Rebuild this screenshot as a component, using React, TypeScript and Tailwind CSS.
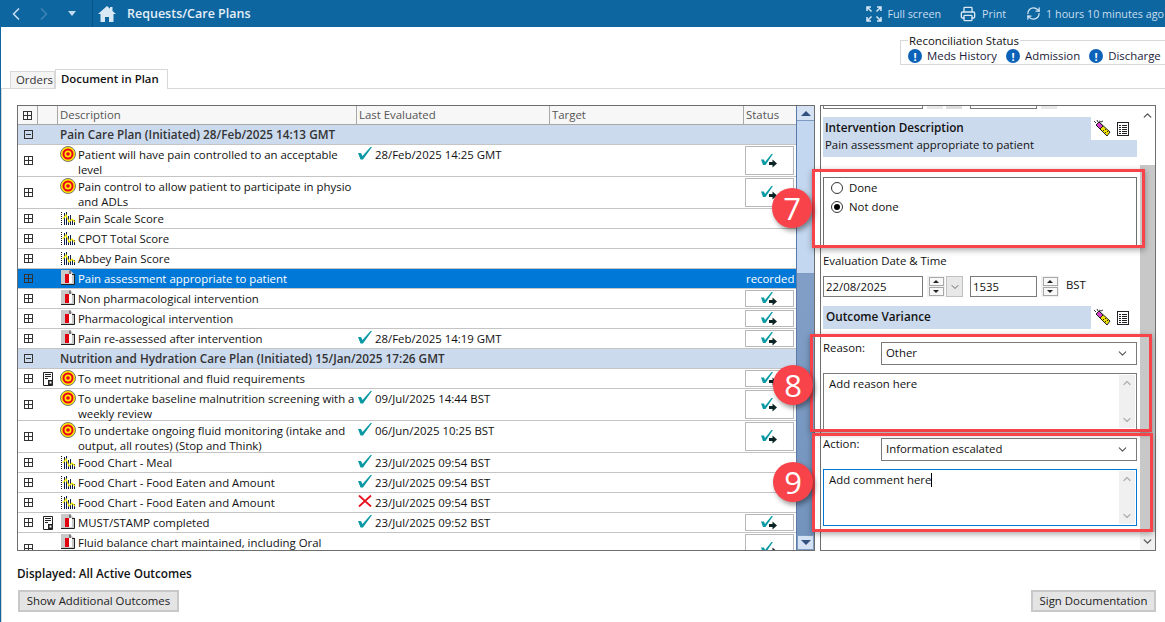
import React from 'react';
import { ChevronLeft, ChevronRight, ChevronUp, ChevronDown, RefreshCw, Printer } from 'lucide-react';

const font = 'font-["Open_Sans","Noto_Sans",sans-serif]';

const Plus = ({ minus }: { minus?: boolean }) => (
  <svg width="9" height="9" viewBox="0 0 9 9" className="shrink-0">
    <rect x="0.5" y="0.5" width="8" height="8" fill="none" stroke="#333" />
    <path d={minus ? 'M2 4.5h5' : 'M0 4.5h9M4.5 0v9'} stroke="#333" />
  </svg>
);

const Target = () => (
  <svg width="16" height="16" viewBox="0 0 16 16" className="shrink-0">
    <circle cx="8" cy="8" r="7.5" fill="#ffe600" stroke="#777" />
    <circle cx="8" cy="8" r="5.5" fill="#e8001c" />
    <circle cx="8" cy="8" r="3.5" fill="#ffe600" />
    <circle cx="8" cy="8" r="1.8" fill="#e8001c" />
  </svg>
);

const Chart = () => (
  <svg width="16" height="16" viewBox="0 0 16 16" className="shrink-0">
    <path d="M1.5 2v13" stroke="#111" strokeDasharray="1 1" />
    <path d="M4.5 15V3M6.5 15V2M8.5 15V6M10.5 15V5M12.5 15V9M14.5 15V10" stroke="#0c1c50" />
    <path d="M3 9l3-4 3 7 3-3 3 3" stroke="#ffee00" strokeWidth="1.2" fill="none" />
  </svg>
);

const DocRed = () => (
  <svg width="14" height="15" viewBox="0 0 14 15" className="shrink-0">
    <path d="M0 0h9l4 4v10H0z" fill="#c9c9c9" />
    <path d="M9 .5v4h4M13.5 4v10.5H0" stroke="#222" fill="none" />
    <rect x="4" y="4" width="4" height="9" fill="#e00010" />
    <rect x="8" y="4" width="3" height="9" fill="#fff" />
  </svg>
);

const Note = () => (
  <svg width="11" height="14" viewBox="0 0 11 14" className="shrink-0">
    <path d="M.5.5h9v13h-9z" fill="#fff" stroke="#222" />
    <path d="M2 2.5h6M2 4.5h6M2 6.5h3" stroke="#222" />
    <rect x="5" y="8" width="5" height="5" fill="#222" />
    <rect x="6.5" y="9.5" width="2" height="2" fill="#fff" />
  </svg>
);

const Tick = () => (
  <svg width="14" height="13" viewBox="0 0 14 13" className="shrink-0">
    <path d="M0 6h3l1.5 3L12.5 0H14L5 12.5H2.5z" fill="#0a98a4" />
  </svg>
);

const Cross = () => (
  <svg width="14" height="12" viewBox="0 0 14 12" className="shrink-0">
    <path d="M1 .5l12 11M13 .5l-12 11" stroke="#e8101c" strokeWidth="1.8" />
  </svg>
);

const TickArrow = () => (
  <svg width="17" height="14" viewBox="0 0 17 14">
    <path d="M0 5.500h3l1 2.500L10.500 0H12L4.500 11H2z" fill="#0a9aa4" />
    <path d="M8 8h3.5V5.500L16 9.500l-4.500 4V11H8z" fill="#0c2424" />
  </svg>
);

const Wand = () => (
  <svg width="18" height="17" viewBox="0 0 18 17" className="shrink-0">
    <path d="M1 1l2 2M4 0l1 2M6 1l2 1 2-1" stroke="#333" fill="none" />
    <path d="M3 5l3-3 11 10-3 4z" fill="#f0e000" stroke="#222" />
    <path d="M3 5l3-3 4 4-3 3z" fill="#d040c8" stroke="#222" />
    <path d="M10 10l1 1M12 12l1 1M12 9l1 1M14 11l1 1M11 13l1 1" stroke="#222" />
  </svg>
);

const ListIcon = () => (
  <svg width="12" height="14" viewBox="0 0 12 14" className="shrink-0">
    <rect x="0.5" y="0.5" width="11" height="13" fill="#fff" stroke="#222" />
    <path d="M2 3.500h8M2 5.500h8M2 7.500h8M2 9.500h8M2 11.500h8" stroke="#222" />
    <path d="M4.500 2v10" stroke="#fff" />
  </svg>
);

const Alert = () => (
  <span className="flex h-[14px] w-[14px] shrink-0 items-center justify-center rounded-full bg-[#0b62b8] text-[11px] font-bold leading-none text-white">!</span>
);

type Row = {
  text: string;
  second?: string;
  tall?: boolean;
  icon?: 'target' | 'chart' | 'doc';
  note?: boolean;
  date?: string;
  mark?: 'tick' | 'cross';
  action?: boolean;
  selected?: boolean;
  group?: boolean;
};

const rows: Row[] = [
  { text: 'Pain Care Plan (Initiated) 28/Feb/2025 14:13 GMT', group: true },
  { text: 'Patient will have pain controlled to an acceptable', second: 'level', icon: 'target', date: '28/Feb/2025 14:25 GMT', mark: 'tick', action: true },
  { text: 'Pain control to allow patient to participate in physio', second: 'and ADLs', icon: 'target', action: true },
  { text: 'Pain Scale Score', icon: 'chart' },
  { text: 'CPOT Total Score', icon: 'chart' },
  { text: 'Abbey Pain Score', icon: 'chart' },
  { text: 'Pain assessment appropriate to patient', icon: 'doc', selected: true },
  { text: 'Non pharmacological intervention', icon: 'doc', action: true },
  { text: 'Pharmacological intervention', icon: 'doc', action: true },
  { text: 'Pain re-assessed after intervention', icon: 'doc', date: '28/Feb/2025 14:19 GMT', mark: 'tick', action: true },
  { text: 'Nutrition and Hydration Care Plan (Initiated) 15/Jan/2025 17:26 GMT', group: true },
  { text: 'To meet nutritional and fluid requirements', icon: 'target', note: true, action: true },
  { text: 'To undertake baseline malnutrition screening with a', second: 'weekly review', icon: 'target', date: '09/Jul/2025 14:44 BST', mark: 'tick', action: true },
  { text: 'To undertake ongoing fluid monitoring (intake and', second: 'output, all routes) (Stop and Think)', icon: 'target', date: '06/Jun/2025 10:25 BST', mark: 'tick', action: true },
  { text: 'Food Chart - Meal', icon: 'chart', date: '23/Jul/2025 09:54 BST', mark: 'tick' },
  { text: 'Food Chart - Food Eaten and Amount', icon: 'chart', date: '23/Jul/2025 09:54 BST', mark: 'tick' },
  { text: 'Food Chart - Food Eaten and Amount', icon: 'chart', date: '23/Jul/2025 09:54 BST', mark: 'cross' },
  { text: 'MUST/STAMP completed', icon: 'doc', note: true, date: '23/Jul/2025 09:52 BST', mark: 'tick', action: true },
  { text: 'Fluid balance chart maintained, including Oral', tall: true, icon: 'doc', action: true },
];

const RowIcon = ({ icon }: { icon?: Row['icon'] }) => {
  if (icon === 'target') return <Target />;
  if (icon === 'chart') return <Chart />;
  return <DocRed />;
};

const PlanRow = ({ row }: { row: Row }) => {
  if (row.group) {
    return (
      <div className="flex h-5 shrink-0 items-center border-b border-[#c4c4c4] bg-[#ccdaee]">
        <span className="flex w-[20px] justify-center"><Plus minus /></span>
        <span className="ml-[22px] -translate-y-px whitespace-nowrap text-[11.75px] font-semibold text-[#333]">{row.text}</span>
      </div>
    );
  }
  const tall = !!row.second || row.tall;
  return (
    <div className={`flex shrink-0 border-b border-[#c4c4c4] ${tall ? 'h-8' : 'h-5'} ${row.selected ? 'bg-[#0078d7] text-white' : ''}`}>
      <span className="flex w-[20px] items-center justify-center"><Plus /></span>
      <span className="flex w-[20px] items-start justify-center pt-[3px]">{row.note && <Note />}</span>
      <span className="flex w-[299px] items-start whitespace-nowrap pl-[2px]">
        <span className="mr-[2px] flex w-[16px] justify-center pt-[1px]"><RowIcon icon={row.icon} /></span>
        <span className="pt-[2px] leading-[15px]">
          {row.text}
          {row.second && <><br />{row.second}</>}
        </span>
      </span>
      <span className="flex w-[193px] items-start gap-[3px] whitespace-nowrap pl-[1px] pt-[2px] leading-[15px]">
        {row.mark === 'tick' && <Tick />}
        {row.mark === 'cross' && <Cross />}
        {row.date}
      </span>
      <span className="w-[194px]" />
      <span className="flex w-[52px] items-center pl-[1px]">
        {row.selected && <span className="whitespace-nowrap pl-[1px]">recorded</span>}
        {row.action && (
          <span className={`flex w-[49px] items-center justify-center border border-[#b8b8b8] bg-white ${tall ? 'h-[29px]' : 'h-[17px]'}`}>
            <TickArrow />
          </span>
        )}
      </span>
    </div>
  );
};

const HeaderCell = ({ label, w }: { label?: string; w: string }) => (
  <span className={`flex h-full shrink-0 items-center border-r border-[#a8a8a8] pl-[2px] text-[#555] ${w}`}>{label}</span>
);

const Spin = () => (
  <span className="flex h-[21px] w-[18px] shrink-0 flex-col items-center justify-center gap-[1px] bg-[#f0f0f0]">
    <span className="flex h-[9px] w-[15px] items-center justify-center border border-[#a8a8a8] bg-[#f8f8f8]">
      <span className="h-0 w-0 border-x-[3px] border-b-[3px] border-x-transparent border-b-[#222]" />
    </span>
    <span className="flex h-[9px] w-[15px] items-center justify-center border border-[#a8a8a8] bg-[#f8f8f8]">
      <span className="h-0 w-0 border-x-[3px] border-t-[3px] border-x-transparent border-t-[#222]" />
    </span>
  </span>
);

const TextBox = ({ text, focus }: { text: string; focus?: boolean }) => (
  <div className={`flex h-[57px] w-[314px] justify-between border ${focus ? 'border-[#0078d7]' : 'border-[#7a7a7a]'}`}>
    <span className="pl-[5px] pt-[2px]">
      {text}
      {focus && <span className="inline-block h-[14px] w-px align-text-bottom bg-black" />}
    </span>
    <span className="my-[1px] mr-[1px] flex w-4 flex-col items-center justify-between bg-[#f0f0f0] py-[2px] text-[#b0b0b0]">
      <ChevronUp size={12} strokeWidth={2.5} />
      <ChevronDown size={12} strokeWidth={2.5} />
    </span>
  </div>
);

const Picker = ({ label, value }: { label: string; value: string }) => (
  <div className="flex h-[23px] w-[314px] justify-between">
    <span className="-mt-[2px] w-[58px]">{label}</span>
    <span className="flex w-[256px] items-center justify-between border border-[#7a7a7a] pl-[4px] pr-[7px]">
      <span className="-translate-y-px">{value}</span>
      <ChevronDown size={13} className="text-[#555]" />
    </span>
  </div>
);

const Callout = ({ n, cls }: { n: number; cls: string }) => (
  <span className={`absolute flex h-[40px] w-[40px] items-center justify-center rounded-full bg-[#f8434a] text-[31px] leading-none text-white shadow-[2px_3px_5px_rgba(0,0,0,0.4)] ${cls}`}>{n}</span>
);

const Frame = ({ cls }: { cls: string }) => (
  <span className={`absolute border-[3px] border-[#f8434a] shadow-[0_2px_6px_rgba(0,0,0,0.35)] ${cls}`} />
);

export default function App() {
  return (
    <div className={`relative flex h-[622px] w-[1165px] flex-col overflow-hidden border-l border-[#0e66a1] bg-white text-[11.4px] leading-4 text-[#111] ${font}`}>
      <header className="-ml-px flex h-[27px] shrink-0 items-center bg-[#0e66a1] text-white">
        <ChevronLeft size={20} className="ml-[6px] text-[#c5dcee]" />
        <ChevronRight size={20} className="ml-[8px] text-[#3f83b5]" />
        <span className="ml-[14px] h-0 w-0 border-x-[4px] border-t-[5px] border-x-transparent border-t-[#c5dcee]" />
        <span className="ml-[16px] h-[27px] w-px bg-[#0a5488]" />
        <svg width="18" height="16" viewBox="0 0 18 16" className="ml-[5px]" fill="#d8e8f4">
          <path d="M9 0L0 8h2.500v8h4.500v-5h4v5h4.500V8H18L14.500 4.900V1h-2.500v1.700z" />
        </svg>
        <span className="ml-[11px] text-[12.5px] font-semibold text-[#e4eff7]">Requests/Care Plans</span>
        <div className="ml-auto flex items-center whitespace-nowrap text-[10.75px] text-[#c9deee]">
          <svg width="16" height="16" viewBox="0 0 16 16" fill="none" stroke="#d8e8f4" strokeWidth="1.5">
            <path d="M1 5V1h4M11 1h4v4M15 11v4h-4M5 15H1v-4M1.500 1.500l4 4M14.500 1.500l-4 4M14.500 14.500l-4-4M1.500 14.500l4-4" />
          </svg>
          <span className="ml-[5px]">Full screen</span>
          <Printer size={16} className="ml-[19px] text-[#d8e8f4]" />
          <span className="ml-[6px]">Print</span>
          <RefreshCw size={15} className="ml-[20px] text-[#d8e8f4]" />
          <span className="ml-[5px] mr-[1px]">1 hours 10 minutes ago</span>
        </div>
      </header>

      <div className="mt-[13px] flex h-[25px] shrink-0 justify-end">
        <div className="relative h-[25px] w-[265px] whitespace-nowrap border border-r-0 border-[#d8d8d8] pl-[7px] pt-[8px]">
          <span className="absolute -top-[7px] left-[7px] bg-white px-[1px] leading-[14px]">Reconciliation Status</span>
          <div className="flex items-center leading-[14px] text-[#1a1a3a]">
            <Alert /><span className="ml-[5px]">Meds History</span>
            <span className="ml-[9px]"><Alert /></span><span className="ml-[5px]">Admission</span>
            <span className="ml-[9px]"><Alert /></span><span className="ml-[5px]">Discharge</span>
          </div>
        </div>
      </div>

      <div className="mt-[4px] flex h-[19px] shrink-0 items-end pl-[9px]">
        <span className="h-[17px] border border-b-0 border-[#d8d8d8] bg-[#f4f4f4] pl-[5px] pr-[1px] leading-[16px] text-[#333]">Orders</span>
        <span className="relative z-10 -mb-px h-[20px] border border-b-0 border-[#d8d8d8] bg-white pl-[5px] pr-[8px] font-semibold leading-[18px]">Document in Plan</span>
      </div>

      <main className="flex min-h-0 flex-1 flex-col border-l border-t border-[#d8d8d8] pl-[15px] pr-[9px] pt-[16px]">
        <div className="flex h-[446px] shrink-0">
          <section className="flex h-full w-[798px] shrink-0 border border-[#6e6e6e]">
            <div className="flex min-w-0 flex-1 flex-col overflow-hidden">
              <div className="flex h-[19px] shrink-0 items-center border-b border-[#a8a8a8] bg-[#f7f7f7]">
                <span className="flex h-full w-[20px] shrink-0 items-center justify-center border-r border-[#a8a8a8]"><Plus /></span>
                <HeaderCell w="w-[20px]" />
                <HeaderCell label="Description" w="w-[299px]" />
                <HeaderCell label="Last Evaluated" w="w-[193px]" />
                <HeaderCell label="Target" w="w-[194px]" />
                <span className="pl-[2px] text-[#555]">Status</span>
              </div>
              {rows.map((row, i) => <PlanRow key={i} row={row} />)}
            </div>
            <div className="flex w-[18px] shrink-0 flex-col border-l border-[#5a7aa8] bg-gradient-to-b from-[#8aa6cc] to-[#7393bd]">
              <span className="flex h-[15px] items-center justify-center border-b border-[#7d9ac0] bg-[#d4e2f4]">
                <span className="h-0 w-0 border-x-[5px] border-b-[5px] border-x-transparent border-b-[#34507e]" />
              </span>
              <span className="h-[153px] border-b border-[#7d9ac0] bg-[#c3d7f0]" />
              <span className="mt-auto flex h-[15px] items-center justify-center border border-[#7d9ac0] bg-[#d4e2f4]">
                <span className="h-0 w-0 border-x-[5px] border-t-[5px] border-x-transparent border-t-[#34507e]" />
              </span>
            </div>
          </section>

          <section className="ml-[5px] flex h-full w-[336px] shrink-0 overflow-hidden border border-[#6e6e6e]">
            <div className="min-w-0 flex-1 pl-[2px]">
              <div className="flex h-[3px] items-end overflow-hidden">
                <span className="h-[6px] w-[100px] shrink-0 border border-[#7a7a7a]" />
                <span className="ml-[4px] h-[6px] w-[16px] bg-[#e8e8e8]" />
                <span className="ml-[3px] h-[6px] w-[16px] bg-[#dcdcdc]" />
                <span className="ml-[8px] h-[6px] w-[67px] border border-[#7a7a7a]" />
                <span className="ml-[4px] h-[6px] w-[16px] bg-[#e8e8e8]" />
              </div>
              <div className="mt-[8px] w-[314px]">
                <div className="flex h-[23px]">
                  <span className="flex-1 bg-[#ccdaee] pl-[2px] pt-[2px] text-[11.75px] font-semibold">Intervention Description</span>
                  <span className="flex w-[46px] items-center gap-[6px] pl-[2px]"><Wand /><ListIcon /></span>
                </div>
                <div className="h-[17px] bg-[#ccdaee] pl-[2px] leading-[9px]">Pain assessment appropriate to patient</div>
              </div>
              <div className="mt-[20px] h-[69px] w-[314px] border border-[#6e6e6e] pl-[7px]">
                <label className="flex h-[19px] items-center gap-[6px]">
                  <span className="h-[12px] w-[12px] rounded-full border border-[#333] bg-white" />
                  Done
                </label>
                <label className="flex h-[19px] items-center gap-[6px]">
                  <span className="flex h-[12px] w-[12px] items-center justify-center rounded-full border border-[#333] bg-white">
                    <span className="h-[6px] w-[6px] rounded-full bg-black" />
                  </span>
                  Not done
                </label>
              </div>
              <div className="mt-[7px] h-[16px]">Evaluation Date &amp; Time</div>
              <div className="mt-[7px] flex h-[21px] items-center">
                <span className="flex h-[21px] w-[100px] items-center border border-[#7a7a7a] pl-[2px]">22/08/2025</span>
                <span className="ml-[4px]"><Spin /></span>
                <span className="ml-[1px] flex h-[21px] w-[17px] items-center justify-center border border-[#c0c0c0] bg-[#e8e8e8]">
                  <ChevronDown size={12} className="text-[#666]" />
                </span>
                <span className="ml-[7px] flex h-[21px] w-[67px] items-center border border-[#7a7a7a] pl-[2px]">1535</span>
                <span className="ml-[4px]"><Spin /></span>
                <span className="-mt-[3px] ml-[7px]">BST</span>
              </div>
              <div className="mt-[9px] flex h-[23px] w-[314px]">
                <span className="flex-1 bg-[#ccdaee] pl-[3px] pt-[2px] text-[11.75px] font-semibold">Outcome Variance</span>
                <span className="flex w-[46px] items-center gap-[6px] pl-[2px]"><Wand /><ListIcon /></span>
              </div>
              <div className="mt-[13px]"><Picker label="Reason:" value="Other" /></div>
              <div className="mt-[8px]"><TextBox text="Add reason here" /></div>
              <div className="mt-[8px]"><Picker label="Action:" value="Information escalated" /></div>
              <div className="mt-[8px]"><TextBox text="Add comment here" focus /></div>
            </div>
            <div className="flex w-[15px] shrink-0 flex-col items-center justify-between bg-[#f0f0f0] text-[#555]">
              <span className="flex h-[59px] w-full justify-center bg-white pt-[3px]"><ChevronUp size={13} strokeWidth={2.5} /></span>
              <span className="w-full flex-1 bg-[#c8c8c8]" />
              <span className="flex h-[18px] w-full items-center justify-center bg-[#f0f0f0]"><ChevronDown size={13} strokeWidth={2.5} /></span>
            </div>
          </section>
        </div>

        <div className="mt-[15px] h-[16px] -translate-y-px text-[11.75px] font-semibold">Displayed: All Active Outcomes</div>
        <div className="mt-[8px] flex justify-between">
          <button className="ml-px h-[22px] w-[161px] border-2 border-[#c8c8c8] bg-[#e4e4e4] text-[#222]">Show Additional Outcomes</button>
          <button className="h-[22px] w-[125px] border-2 border-[#c8c8c8] bg-[#e4e4e4] text-[#222]">Sign Documentation</button>
        </div>
      </main>

      <Frame cls="left-[811px] top-[169px] h-[79px] w-[333px]" />
      <Frame cls="left-[809px] top-[334px] h-[98px] w-[342px]" />
      <Frame cls="left-[811px] top-[433px] h-[99px] w-[341px]" />
      <Callout n={7} cls="left-[771px] top-[188px]" />
      <Callout n={8} cls="left-[772px] top-[365px]" />
      <Callout n={9} cls="left-[772px] top-[462px]" />
    </div>
  );
}
